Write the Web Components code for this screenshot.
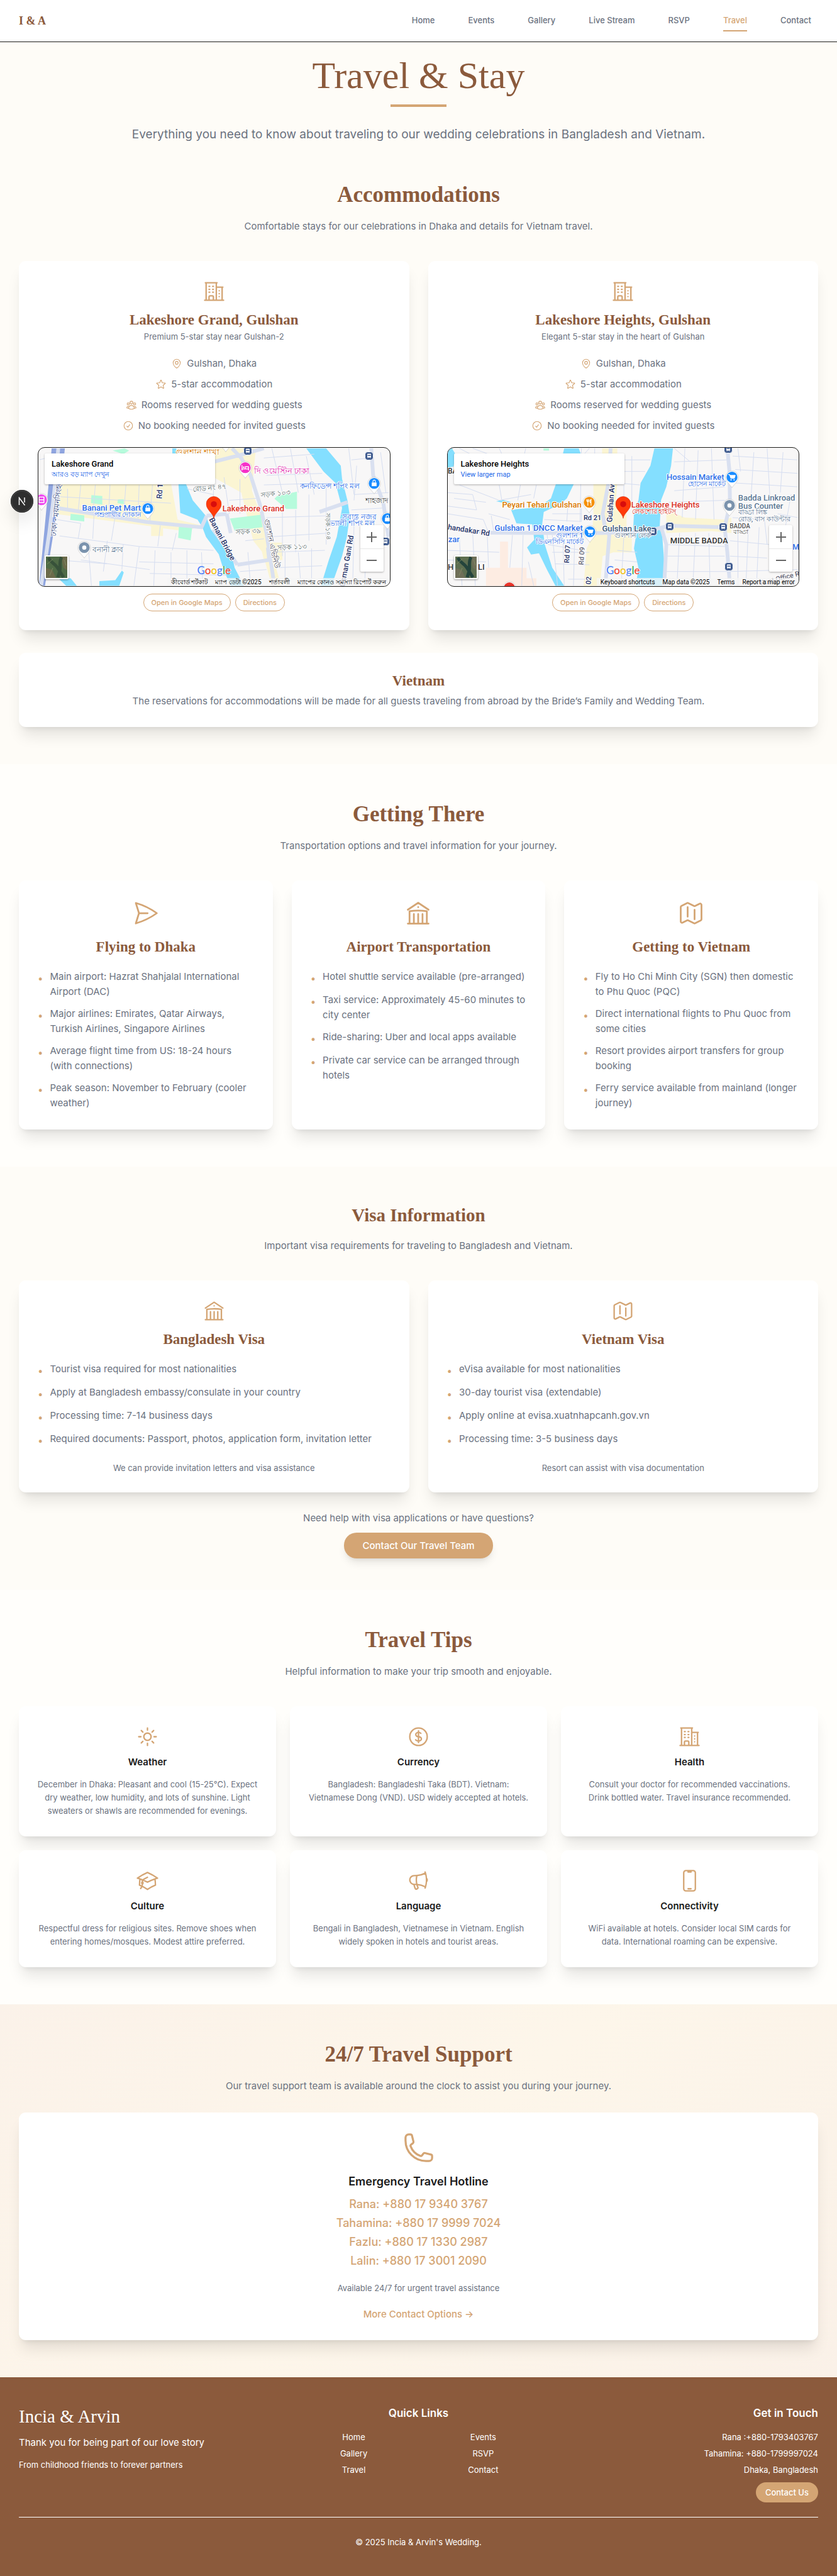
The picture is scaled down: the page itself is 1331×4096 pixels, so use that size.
<!DOCTYPE html>
<html lang="en">
<head>
<meta charset="utf-8">
<meta name="viewport" content="width=device-width, initial-scale=1">
<title>Travel &amp; Stay</title>
<style>
:root{--brown:#8b5a3c;--gold:#d4a574;--gray:#6b7280;--ink:#1a1a1a;--cream:#fefcf7;--ivory:#fffefb;
--serif:"Liberation Serif",serif;--sans:Inter,sans-serif;--gutter:30px}
body{margin:0;background:var(--cream);color:var(--gray);font:400 15px/22px var(--sans)}
</style>
</head>
<body>
<travel-page></travel-page>
<script>
const ICONS={
building:'M2.25 21h19.5m-18-18v18m10.5-18v18m6-13.5V21M6.75 6.75h.75m-.75 3h.75m-.75 3h.75m3-6h.75m-.75 3h.75m-.75 3h.75M6.75 21v-3.375c0-.621.504-1.125 1.125-1.125h2.25c.621 0 1.125.504 1.125 1.125V21M3 3h12m-.75 4.5H21m-3.75 3.75h.008v.008h-.008v-.008Zm0 3h.008v.008h-.008v-.008Zm0 3h.008v.008h-.008v-.008Z',
pin:'M15 10.5a3 3 0 1 1-6 0 3 3 0 0 1 6 0Z M19.5 10.5c0 7.142-7.5 11.25-7.5 11.25S4.5 17.642 4.5 10.5a7.5 7.5 0 1 1 15 0Z',
star:'M11.48 3.499a.562.562 0 0 1 1.04 0l2.125 5.111a.563.563 0 0 0 .475.345l5.518.442c.499.04.701.663.321.988l-4.204 3.602a.563.563 0 0 0-.182.557l1.285 5.385a.562.562 0 0 1-.84.61l-4.725-2.885a.562.562 0 0 0-.586 0L6.982 20.54a.562.562 0 0 1-.84-.61l1.285-5.386a.562.562 0 0 0-.182-.557l-4.204-3.602a.562.562 0 0 1 .321-.988l5.518-.442a.563.563 0 0 0 .475-.345L11.48 3.5Z',
group:'M18 18.72a9.094 9.094 0 0 0 3.741-.479 3 3 0 0 0-4.682-2.72m.94 3.198.001.031c0 .225-.012.447-.037.666A11.944 11.944 0 0 1 12 21c-2.17 0-4.207-.576-5.963-1.584A6.062 6.062 0 0 1 6 18.719m12 0a5.971 5.971 0 0 0-.941-3.197m0 0A5.995 5.995 0 0 0 12 12.75a5.995 5.995 0 0 0-5.058 2.772m0 0a3 3 0 0 0-4.681 2.72 8.986 8.986 0 0 0 3.74.477m.94-3.197a5.971 5.971 0 0 0-.94 3.197M15 6.75a3 3 0 1 1-6 0 3 3 0 0 1 6 0Zm6 3a2.25 2.25 0 1 1-4.5 0 2.25 2.25 0 0 1 4.5 0Zm-13.5 0a2.25 2.25 0 1 1-4.5 0 2.25 2.25 0 0 1 4.5 0Z',
check:'M9 12.75 11.25 15 15 9.75M21 12a9 9 0 1 1-18 0 9 9 0 0 1 18 0Z',
plane:'M6 12 3.269 3.125A59.769 59.769 0 0 1 21.485 12 59.768 59.768 0 0 1 3.27 20.875L5.999 12Zm0 0h7.5',
library:'M12 21v-8.25M15.75 21v-8.25M8.25 21v-8.25M3 9l9-6 9 6m-1.5 12V10.332A48.36 48.36 0 0 0 12 9.75c-2.551 0-5.056.2-7.5.582V21M3 21h18M12 6.75h.008v.008H12V6.75Z',
map:'M9 6.75V15m6-6v8.25m.503 3.498 4.875-2.437c.381-.19.622-.58.622-1.006V4.82c0-.836-.88-1.38-1.628-1.006l-3.869 1.934c-.317.159-.69.159-1.006 0L9.503 3.252a1.125 1.125 0 0 0-1.006 0L3.622 5.689C3.24 5.88 3 6.27 3 6.695V19.18c0 .836.88 1.38 1.628 1.006l3.869-1.934c.317-.159.69-.159 1.006 0l4.994 2.497c.317.158.69.158 1.006 0Z',
sun:'M12 3v2.25m6.364.386-1.591 1.591M21 12h-2.25m-.386 6.364-1.591-1.591M12 18.75V21m-4.773-4.227-1.591 1.591M5.25 12H3m4.227-4.773L5.636 5.636M15.75 12a3.75 3.75 0 1 1-7.5 0 3.75 3.75 0 0 1 7.5 0Z',
dollar:'M12 6v12m-3-2.818.879.659c1.171.879 3.07.879 4.242 0 1.172-.879 1.172-2.303 0-3.182C13.536 12.219 12.768 12 12 12c-.725 0-1.45-.22-2.003-.659-1.106-.879-1.106-2.303 0-3.182s2.9-.879 4.006 0l.415.33M21 12a9 9 0 1 1-18 0 9 9 0 0 1 18 0Z',
cap:'M4.26 10.147a60.438 60.438 0 0 0-.491 6.347A48.62 48.62 0 0 1 12 20.904a48.62 48.62 0 0 1 8.232-4.41 60.46 60.46 0 0 0-.491-6.347m-15.482 0a50.636 50.636 0 0 0-2.658-.813A59.906 59.906 0 0 1 12 3.493a59.903 59.903 0 0 1 10.399 5.84c-.896.248-1.783.52-2.658.814m-15.482 0A50.717 50.717 0 0 1 12 13.489a50.702 50.702 0 0 1 7.74-3.342M6.75 15a.75.75 0 1 0 0-1.5.75.75 0 0 0 0 1.5Zm0 0v-3.675A55.378 55.378 0 0 1 12 8.443m-7.007 11.55A5.981 5.981 0 0 0 6.75 15.75v-1.5',
megaphone:'M10.34 15.84c-.688-.06-1.386-.09-2.09-.09H7.5a4.5 4.5 0 1 1 0-9h.75c.704 0 1.402-.03 2.09-.09m0 9.18c.253.962.584 1.892.985 2.783.247.55.06 1.21-.463 1.511l-.657.38c-.551.318-1.26.117-1.527-.461a20.845 20.845 0 0 1-1.44-4.282m3.102.069a18.03 18.03 0 0 1-.59-4.59c0-1.586.205-3.124.59-4.59m0 9.18a23.848 23.848 0 0 1 8.835 2.535M10.34 6.66a23.847 23.847 0 0 0 8.835-2.535m0 0A23.74 23.74 0 0 0 18.795 3m.38 1.125a23.91 23.91 0 0 1 1.014 5.395m-1.014 8.855c-.118.38-.245.754-.38 1.125m.38-1.125a23.91 23.91 0 0 0 1.014-5.395m0-3.46c.495.413.811 1.035.811 1.73 0 .695-.316 1.317-.811 1.73m0-3.46a24.347 24.347 0 0 1 0 3.46',
mobile:'M10.5 1.5H8.25A2.25 2.25 0 0 0 6 3.75v16.5a2.25 2.25 0 0 0 2.25 2.25h7.5A2.25 2.25 0 0 0 18 20.25V3.75a2.25 2.25 0 0 0-2.25-2.25H13.5m-3 0V3h3V1.5m-3 0h3m-3 18.75h3',
phone:'M2.25 6.75c0 8.284 6.716 15 15 15h2.25a2.25 2.25 0 0 0 2.25-2.25v-1.372c0-.516-.351-.966-.852-1.091l-4.423-1.106c-.44-.11-.902.055-1.173.417l-.97 1.293c-.282.376-.769.542-1.21.38a12.035 12.035 0 0 1-7.143-7.143c-.162-.441.004-.928.38-1.21l1.293-.97c.363-.271.527-.734.417-1.173L6.963 3.102a1.125 1.125 0 0 0-1.091-.852H4.5A2.25 2.25 0 0 0 2.25 4.5v2.25Z'
};
const define=(name,css,render)=>customElements.define(name,class extends HTMLElement{
  connectedCallback(){
    if(this.shadowRoot)return;
    const t=document.createElement('template');
    t.innerHTML=`<style>*{box-sizing:border-box}h1,h2,h3,h4,p,ul{margin:0;padding:0}ul{list-style:none}a{color:inherit;text-decoration:none}${css}</style>${render(this)}`;
    this.attachShadow({mode:'open'}).append(t.content.cloneNode(true));
  }
});

define('ui-icon',':host{display:block;color:var(--gold);width:var(--size,37px);height:var(--size,37px);flex:none}svg{display:block;width:100%;height:100%}',
 e=>`<svg viewBox="0 0 24 24" fill="none" stroke="currentColor" stroke-width="1.5" stroke-linecap="round" stroke-linejoin="round" aria-hidden="true"><path d="${ICONS[e.getAttribute('name')]}"/></svg>`);

define('site-header',`:host{display:block;background:#fff;border-bottom:1px solid #1c1c1a}
 div{display:flex;align-items:center;justify-content:space-between;height:66px;padding:0 var(--gutter)}
 .logo{font:700 18px/26px var(--serif);color:var(--brown)}
 nav{display:flex;gap:31px;font:500 13px/18px var(--sans)}
 nav a{padding:7px 0;margin:0 11px;border-bottom:2px solid transparent}
 nav a[aria-current]{color:var(--gold);border-color:var(--gold)}`,
 ()=>`<div><a class="logo" href="#">I &amp; A</a><nav>${['Home','Events','Gallery','Live Stream','RSVP','Travel','Contact'].map(n=>`<a href="#"${n==='Travel'?' aria-current="page"':''}>${n}</a>`).join('')}</nav></div>`);

define('page-hero',`:host{display:flex;flex-direction:column;align-items:center;text-align:center;padding:23px var(--gutter) 3px}
 h1{font:400 60px/60px var(--serif);color:var(--brown)}
 i{width:89px;height:4px;background:var(--gold);margin:16px 0 31px}
 p{font-size:19px;line-height:26px}`,
 ()=>`<h1>Travel &amp; Stay</h1><i></i><p>Everything you need to know about traveling to our wedding celebrations in Bangladesh and Vietnam.</p>`);

define('page-section',`:host{display:block;padding:59px var(--gutter)}
 :host([tone=ivory]){background:var(--ivory)}
 :host([tone=warm]){background:linear-gradient(135deg,#fbf2e9 0%,#fdf6ea 50%,#faf1e8 100%)}
 header{text-align:center;margin-bottom:44px}
 :host([tone=warm]) header{margin-bottom:31px}
 h2{font:700 35px/37px var(--serif);color:var(--brown);padding-top:2px;margin-bottom:21px}
 :host([small]) h2{font-size:29px;line-height:33px}`,
 e=>`<header><h2>${e.getAttribute('heading')}</h2><p>${e.getAttribute('lead')}</p></header><slot></slot>`);

define('card-grid',`:host{display:grid;grid-template-columns:repeat(var(--cols,2),minmax(0,1fr));gap:var(--gap,30px)}`,()=>'<slot></slot>');

define('ui-card',`:host{display:flex;flex-direction:column;align-items:center;text-align:center;background:#fff;border-radius:11px;padding:30px;
  box-shadow:0 18px 23px -5px rgb(0 0 0/.1),0 7px 9px -6px rgb(0 0 0/.1)}
 h3{font:700 23px/30px var(--serif);color:var(--brown)}
 ui-icon{margin-bottom:12px}
 :host([large]) ui-icon{--size:44px;margin-bottom:17px}
 ::slotted(*){align-self:stretch}`,
 e=>`${e.hasAttribute('icon')?`<ui-icon name="${e.getAttribute('icon')}"></ui-icon>`:''}<h3>${e.getAttribute('heading')}</h3><slot></slot>`);

define('bullet-list',`:host{display:block;text-align:left;line-height:24px;margin-top:20px}
 ul{display:flex;flex-direction:column;gap:11px}
 li{display:flex;gap:11px;min-height:26px}
 b{color:var(--gold);font-weight:400;line-height:22px;margin-top:4px}`,
 e=>`<ul>${e.getAttribute('items').split('|').map(t=>`<li><b>•</b><span>${t}</span></li>`).join('')}</ul>`);

define('tip-card',`:host{display:flex;flex-direction:column;align-items:center;text-align:center;background:#fff;border-radius:11px;padding:30px 27px;
  box-shadow:0 18px 23px -5px rgb(0 0 0/.1),0 7px 9px -6px rgb(0 0 0/.1)}
 h3{font:600 15px/22px var(--sans);color:var(--ink);margin:11px 0 14px}
 p{font-size:13px;line-height:21px}`,
 e=>`<ui-icon name="${e.getAttribute('icon')}"></ui-icon><h3>${e.getAttribute('heading')}</h3><p><slot></slot></p>`);

define('hotel-card',`:host{display:block}
 .sub{font-size:13px;line-height:18px;margin-top:2px}
 ul{display:flex;flex-direction:column;gap:11px;margin:23px 0}
 li{display:flex;justify-content:center;align-items:center;gap:7px}
 ui-icon{--size:18px}
 .links{display:flex;justify-content:center;gap:7px;margin-top:11px}
 .links a{font:500 11px/16px var(--sans);color:var(--gold);border:1px solid var(--gold);border-radius:14px;padding:5px 12px}`,
 e=>`<ui-card icon="building" heading="${e.getAttribute('heading')}"><p class="sub">${e.getAttribute('sub')}</p>
 <ul><li><ui-icon name="pin"></ui-icon>Gulshan, Dhaka</li><li><ui-icon name="star"></ui-icon>5-star accommodation</li><li><ui-icon name="group"></ui-icon>Rooms reserved for wedding guests</li><li><ui-icon name="check"></ui-icon>No booking needed for invited guests</li></ul>
 <city-map place="${e.getAttribute('place')}"></city-map>
 <div class="links"><a href="#">Open in Google Maps</a><a href="#">Directions</a></div></ui-card>`);

/* Map drawings share one 1568-unit wide grid; dx is the map's left edge on it. */
const BLUE='#2f6fe8',NAVY='#1f3166',SLATE='#5b7793',RED='#d93025';
const MAPS={
grand:{title:'Lakeshore Grand',more:'আরও বড় ম্যাপ দেখুন',dx:140,
 legal:['কীবোর্ড শর্টকাট','ম্যাপ ডেটা ©2025','শর্তাবলী','ম্যাপের কোনও সমস্যা রিপোর্ট করুন'],
 land:[['#fbf5d3','M205 240H640L665 430 760 462 690 490 610 475V515H565V465L200 400ZM800 60H960L945 280 985 430 1055 774H1020L985 600 950 540 905 290 800 210ZM975 550H1060V640H990Z'],
 ['#b6fbdc','M340 303 381 308V352L338 345ZM262 400 313 408V440L260 432ZM670 465 720 470 714 538 667 525ZM862 425 978 405 985 470 880 488ZM1040 308 1115 285V375H1075L1030 322ZM420 72 465 60 482 72 460 90ZM440 325H462V350L438 345Z'],
 ['#84dfff','M645 60H660V90H645ZM668 240H695L722 330 772 412 790 480 832 560 868 605 880 680 915 774H865L838 690 820 610 772 520 758 470 740 430 675 395ZM1150 60H1225L1280 150 1285 220 1305 330 1314 410 1303 520 1285 620 1245 774H1205L1235 640 1265 520 1285 370 1260 240 1215 180ZM215 735H262L285 774H245ZM370 750 430 745 455 695 462 705 445 774H370Z'],
 ['#8fa5e0','M190 60H240Q222 300 165 774H142Q170 400 190 60Z']],
 wide:'M215 60Q195 420 150 774M210 370 545 442 755 470 775 410M800 130 900 95 990 60M870 60 905 110 940 200 975 350 1000 500 1030 774M1395 60 1402 200 1440 340 1460 520M890 665 1010 640 1005 575M775 410 850 400M800 480 890 665M1200 390 1305 340M850 400 865 500',
 thin:'M142 120 200 100M250 270V380M300 250 290 390M355 250 345 400M410 250 405 410M470 250 460 430M520 250 515 435M570 250 560 445M205 310 640 345M210 430 300 450 290 530M220 515 520 570 800 590M300 640 560 690M330 600 340 774M400 540 385 700M460 560 455 690M520 570 500 774M580 590 575 774M640 600 640 774M700 590 700 774M755 600 760 774M210 640 400 660M520 650 800 660M560 710 850 720M600 460 590 570M660 500 645 590M430 410 415 540M350 400 345 530M800 240 800 330M840 210 860 400M900 220 900 400M700 270 800 300M860 330 960 320M990 110 1180 90M1020 60 1060 290M1090 60 1120 290M1150 100 1180 300M1000 200 1210 190M990 250 1240 240M1060 320 1060 620M1110 380 1110 600M1160 300 1160 540M1225 260 1225 560M1000 420 1240 410M1010 520 1240 500M1010 600 1220 590M1040 680 1210 670M1070 600 1070 774M1120 600 1130 774M1170 580 1170 774M1320 120 1390 110M1310 60 1330 300 1461 290M1340 150 1330 330M1430 80 1450 290M1320 380 1440 370M1330 450 1325 774M1380 420 1370 774M900 700 1000 690M920 540 990 530M930 600 940 774',
 pins:[[312,590,'#7b93ad','•'],[553,386,'#1a8cff','▮'],[921,175,'#f531c8','▬'],[1407,256,'#1a8cff','▮'],[847,36,'#f58f00',''],[152,341,'#f04cf0','▪'],[1456,439,'#1a8cff','▮']],
 buses:[[929,72],[1388,98],[1448,543]],
 labels:[['Banani Pet Mart',305,368,13,BLUE],['পশুপাখীর দোকান',350,405,11,BLUE],['বনানী ক্লাব',343,588,12,SLATE],['গুলশান শাখা',656,76,13,'#d97a00'],['দি ওয়েস্টিন ঢাকা',953,175,13,'#e31fb0'],['কনফিডেন্স শপিং মল',1127,256,12,BLUE],['শাহজাদ',1373,333,12,'#444'],['সবাস্ত নজর',1286,418,12,BLUE],['ভ্যালী শপিং মল',1238,448,12,BLUE],['রোড নং ৪৭',724,265,11,'#566',-5],['সড়ক ১০৩',980,296,11,'#566',-5],['সড়ক ৩৯',884,492,11,'#566',-4],['সড়ক ১১৩',1040,573,11,'#566',-3],['Lakeshore Grand',834,371,13,RED],['Rd 1',568,284,12,NAVY,-86],['Banani Bridge',744,530,12,NAVY,62],['Osman Gani Rd',1204,646,12,NAVY,-80],['ঢাকা - ময়মনসিংহ',112,385,12,'#33467f',-84],['গুলশান এভিনিউ',925,555,12,'#556',78],['সড়ক ১০৪',1180,466,10,'#566',88]],
 sat:['#4f6b46','#38523a','#6b6a4a']},
heights:{title:'Lakeshore Heights',more:'View larger map',dx:106,
 legal:['Keyboard shortcuts','Map data ©2025','Terms','Report a map error'],
 land:[['#fbf5d3','M655 240H745L740 330 780 350V470L745 560 730 600 690 620 680 774H618L630 580 650 520 655 400ZM688 60H745V90H688ZM930 380 1000 420 1150 430 1175 420V500L1100 490 930 500ZM720 500H800V600H720Z'],
 ['#fdece2','M303 545H333V680H403V735H440V774H250V680H303Z'],
 ['#b6fbdc','M467 60H488V72H467Z'],
 ['#84dfff','M106 60H122L135 90 128 155 106 160ZM545 60H600L608 90H540ZM515 240H583L555 320 530 350 468 390 462 455 472 560 500 680 545 774H512L480 690 450 605 420 612 405 575 432 535 425 455 365 450 345 380 375 375 420 370 455 360 495 320ZM885 60H955L948 150 930 260 910 330 905 470 915 520 922 650 915 774H815L825 680 808 580 815 520 805 480 808 400 825 330 833 240 870 150ZM288 335 315 328 345 340 320 345Z']],
 wide:'M106 470 260 498 450 500 690 500 860 490 940 462 1145 470M720 60 712 240 690 400 700 480 715 510 700 774M1160 60 1168 180 1170 350 1150 470 1160 600 1170 774M912 480 915 490 930 560 922 774',
 thin:'M106 290 200 300 215 380 106 360M150 250 300 330 420 300M300 250 310 330M380 250 370 330M440 250 430 320M130 320 250 340M150 530 160 774M200 500 210 774M106 590 300 600M255 510 260 680M350 510 340 680M390 510 385 774M106 640 250 650M410 650 430 774M260 498 240 430 106 400M470 430 610 440M610 60 605 440M260 400 340 430M270 410 280 500M480 500 485 560 610 590M500 510 520 774M540 500 545 774M585 510 580 774M500 600 640 600M510 660 640 665M560 740 640 740M610 340V440M560 330 555 440M500 400 610 400M770 250V340M800 100V350M745 120 870 120M770 180 850 180M745 240 830 250M745 590 820 600M735 640 820 650M730 690 820 690M770 510 760 774M660 60V90M640 60 620 90M960 130 1160 120M950 200 1160 210M960 280 1150 260M940 340 1150 330M1000 60 990 420M1050 70 1040 430M1100 60 1110 430M960 60 1020 130M1180 100 1427 120M1200 60 1210 180M1260 80 1250 300M1310 60 1320 300M1370 80 1360 290M1190 170 1427 190M1190 240 1427 260M1180 420 1300 430 1310 560M1240 450 1230 774M1280 470 1270 774M930 560 1150 570M930 620 1150 620M930 700 1160 700M980 500 970 774M1040 500 1030 774M1090 500 1095 774M1170 540 1320 560M1170 620 1310 630M1170 700 1427 690M1200 500V774M1350 400 1427 420M1400 300 1380 460M150 60 220 110M300 60 310 90M400 60 395 90M200 60 260 90',
 pins:[[640,353,'#f58f00','Ψ'],[642,507,'#1a8cff','▾'],[1178,225,'#1a8cff','▾'],[1170,371,'#7b93ad','•'],[339,800,'#e8352b','']],
 buses:[[1164,62],[944,467],[1146,469],[1168,674],[881,491]],
 labels:[['Peyari Tehari Gulshan',312,352,13,'#d97a00'],['Rd 21',619,420,11,NAVY],['Gulshan 1 DNCC Market',284,472,13,BLUE],['গুলশান 1',514,511,11,BLUE],['ডিএনসিসি মার্কেট',440,543,11,BLUE],['Gulshan Lake',689,475,13,'#3c5a78'],['গুলশান লেক',735,510,11,SLATE],['Hossain Market',932,206,13,BLUE],['হোসেন মার্কেট',1012,243,11,BLUE],['Lakeshore Heights',799,352,13,RED],['লেকশোর হাইটস্',801,388,11,RED],['Badda Linkroad',1202,316,13,SLATE],['Bus Counter',1202,358,13,SLATE],['বাড্ডা লিঙ্ক',1202,392,11,SLATE],['রোড, বাস কাউন্টার',1202,425,11,SLATE],['BADDA',1170,464,10,'#555'],['বাড্ডা',1184,495,10,'#555'],['MIDDLE BADDA',946,538,13,'#333'],['Gulshan Av',650,345,12,NAVY,-86],['Rd 07',524,610,11,NAVY,-86],['Rd 09',578,618,11,'#667',-86],['02',624,745,11,NAVY,-86],['handakar Rd',108,486,12,NAVY,9],['zar',109,532,13,BLUE],['BA',107,178,12,'#333'],['H',107,676,13,'#333'],['LI',221,676,13,'#333'],['Mi',1407,574,12,BLUE],['Post Office Rd',1282,735,11,'#667',-14]],
 sat:['#5d6e50','#24443c','#6f6f58']}
};
define('city-map',`:host{display:block}
 .map{position:relative;height:222px;border:1px solid #1c1c1a;border-radius:11px;overflow:hidden;background:#f8f7f7;font-family:Roboto,sans-serif;text-align:left}
 .map>*{position:absolute}
 .art{inset:0;width:100%;height:100%}
 .label{white-space:nowrap;line-height:1;font-weight:500;text-shadow:1px 0 #fff,-1px 0 #fff,0 1px #fff,0 -1px #fff,1px 1px #fff,-1px -1px #fff}
 .poi,.bus,.main{transform:translate(-50%,-50%)}
 .poi{width:23px;height:31px}.bus{width:14px;height:14px}.main{width:25px;height:36px}
 .info{left:10px;top:9px;width:271px;height:49px;background:#fff;border-radius:2px;box-shadow:0 1px 3px rgb(0 0 0/.3);padding:10px 11px;display:flex;flex-direction:column;align-items:flex-start;gap:3px}
 .info strong{font:500 13px/14px Roboto,sans-serif;color:#000}
 .info a{font:400 11px/14px Roboto,sans-serif;color:#1a66e8}
 .sat{left:10px;bottom:11px;width:38px;height:38px;padding:0;border:2px solid #fff;border-radius:2px;box-shadow:0 1px 3px rgb(0 0 0/.4)}
 .sat svg{display:block}
 .zoom{right:10px;bottom:23px;width:37px;display:flex;flex-direction:column;background:#fff;border-radius:2px;box-shadow:0 1px 3px rgb(0 0 0/.3)}
 .zoom button{height:37px;border:0;background:none;padding:0;display:grid;place-items:center}
 .zoom button+button{border-top:1px solid #e6e6e6}
 .logo{left:50%;bottom:17px;transform:translateX(-50%);font:500 17px/17px Lato,sans-serif;text-shadow:1px 0 #fff,-1px 0 #fff}
 .legal{right:0;bottom:0;height:13px;display:flex;gap:12px;padding:0 6px;background:rgb(245 245 245/.75);font:400 10px/13px Roboto,sans-serif;color:#000;white-space:nowrap}`,
 e=>{const m=MAPS[e.getAttribute('place')],X=x=>((x-m.dx)/13.24).toFixed(2)+'%',Y=y=>((y-57)/7.19).toFixed(2)+'%',at=(x,y)=>`left:${X(x)};top:${Y(y)}`;
 return `<div class="map"><svg class="art" viewBox="${m.dx} 57 1324 719" preserveAspectRatio="none" aria-hidden="true">
 ${m.land.map(([c,d])=>`<path fill="${c}" d="${d}"/>`).join('')}
 <path d="${m.thin}" fill="none" stroke="#d5ddf0" stroke-width="1" vector-effect="non-scaling-stroke"/>
 <path d="${m.wide}" fill="none" stroke="#d9e0f0" stroke-width="6" stroke-linejoin="round" vector-effect="non-scaling-stroke"/></svg>
 ${m.buses.map(([x,y])=>`<svg class="bus" style="${at(x,y)}" viewBox="0 0 14 14"><rect x=".5" y=".5" width="13" height="13" rx="4" fill="#3f5b8f" stroke="#fff"/><rect x="4" y="3.500" width="6" height="6" rx="1" fill="#fff"/><path d="M4.500 5.500h5v1.500h-5z" fill="#3f5b8f"/><path d="M5 10.500v-1m4 1v-1" stroke="#fff"/></svg>`).join('')}
 ${m.labels.map(([t,x,y,s,c,r])=>`<span class="label" style="${at(x,y)};font-size:${s}px;color:${c};transform:translateY(-50%)${r?` rotate(${r}deg)`:''}">${t}</span>`).join('')}
 ${m.pins.map(([x,y,c,g])=>`<svg class="poi" style="${at(x,y)}" viewBox="0 0 24 32"><path d="M12 29C9 24 1.500 19 1.500 11.500a10.500 10.500 0 0 1 21 0C22.500 19 15 24 12 29Z" fill="#fff" stroke="#bbb" stroke-width=".6"/><circle cx="12" cy="11.500" r="9" fill="${c}"/>${({'•':'<circle cx="12" cy="11.500" r="3.500" fill="#fff"/>','▮':'<path d="M8 10h8v6H8z" fill="#fff"/><path d="M10 10V8a2 2 0 0 1 4 0v2" fill="none" stroke="#fff" stroke-width="1.200"/>','▬':'<path d="M6.500 7v9m0-2.500h11V16m0-2.500V10H12v3.500" fill="none" stroke="#fff" stroke-width="1.400"/><circle cx="9.200" cy="10.700" r="1.300" fill="#fff"/>','▪':'<path d="M8 7h8v9H8zM8 11.500h8" fill="none" stroke="#fff" stroke-width="1.500"/>','Ψ':'<path d="M8 6.500v3a2 2 0 0 0 3.500 0v-3M9.700 6.500V17M15 17V6.500c-1.500 1-2 3-1.500 5.500H15" fill="none" stroke="#fff" stroke-width="1.300"/>','▾':'<path d="M6 7h2l2 6.500h6l1.500-5H8.500z" fill="#fff" stroke="#fff"/><circle cx="10.500" cy="16" r="1.100" fill="#fff"/><circle cx="15.500" cy="16" r="1.100" fill="#fff"/>'})[g]||''}</svg>`).join('')}
 <svg class="main" style="left:50%;top:43%" viewBox="0 0 26 37"><path d="M13 36.500C12 28 .5 22 .5 12.800a12.500 12.500 0 0 1 25 0C25.500 22 14 28 13 36.500Z" fill="#ff3b0a" stroke="#d22b12" stroke-width=".6"/><circle cx="13" cy="13" r="5" fill="#d80d0d"/></svg>
 <div class="logo" aria-label="Google"><span style="color:#4d80f5">G</span><span style="color:#f04530">o</span><span style="color:#eebf14">o</span><span style="color:#4d80f5">g</span><span style="color:#34a853">l</span><span style="color:#f04530">e</span></div>
 <div class="info"><strong>${m.title}</strong><a href="#">${m.more}</a></div>
 <button class="sat" aria-label="Satellite view"><svg width="34" height="34" viewBox="0 0 34 34"><path fill="${m.sat[0]}" d="M0 0h34v34H0z"/><path fill="${m.sat[2]}" d="M0 18l10 3 6 13H0zM24 0h10v22l-6-4z"/><path d="M4 2c4 8 10 9 14 15s6 10 10 16M25 1c-5 8-1 14-3 22l-3 10" fill="none" stroke="${m.sat[1]}" stroke-width="5"/><path d="M2 12l9-8M6 30l5-12M29 5l3 9" stroke="#849066" stroke-width=".8"/></svg></button>
 <div class="zoom"><button aria-label="Zoom in"><svg width="16" height="16" viewBox="0 0 16 16"><path d="M8 0v16M0 8h16" stroke="#666" stroke-width="2"/></svg></button><button aria-label="Zoom out"><svg width="16" height="16" viewBox="0 0 16 16"><path d="M0 8h16" stroke="#666" stroke-width="2"/></svg></button></div>
 <div class="legal">${m.legal.map(t=>`<span>${t}</span>`).join('')}</div></div>`});

define('hotline-card',`:host{display:flex;flex-direction:column;align-items:center;text-align:center;background:#fff;border-radius:11px;padding:30px;
  box-shadow:0 18px 23px -5px rgb(0 0 0/.1),0 7px 9px -6px rgb(0 0 0/.1)}
 ui-icon{--size:52px}
 h3{font:600 18px/26px var(--sans);color:var(--ink);margin:15px 0 8px}
 li{font:500 18px/30px var(--sans);color:var(--gold)}
 p{font-size:13px;line-height:18px;margin:19px 0 22px}
 .more{font-weight:500;color:var(--gold)}`,
 ()=>`<ui-icon name="phone"></ui-icon><h3>Emergency Travel Hotline</h3><ul><li><a href="#">Rana: +880 17 9340 3767</a></li><li><a href="#">Tahamina: +880 17 9999 7024</a></li><li><a href="#">Fazlu: +880 17 1330 2987</a></li><li><a href="#">Lalin: +880 17 3001 2090</a></li></ul><p>Available 24/7 for urgent travel assistance</p><a class="more" href="#">More Contact Options →</a>`);

define('site-footer',`:host{display:block;background:var(--brown);color:#fff;padding:44px var(--gutter) 45px;font-size:13px;line-height:18px}
 .cols{display:grid;grid-template-columns:repeat(3,minmax(0,1fr));gap:30px}
 h3{font:400 29px/33px var(--serif);padding-top:2px;margin-bottom:14px}
 .thanks{font-size:15px;line-height:22px;margin-bottom:15px}
 h4{font:600 17px/26px var(--sans);margin-bottom:16px}
 .mid{text-align:center}.end{text-align:right}
 .links{display:grid;grid-template-columns:1fr 1fr;gap:8px}
 .end div{display:flex;flex-direction:column;gap:8px;margin-bottom:18px}
 .btn{background:var(--gold);border-radius:16px;padding:8px 15px;font-weight:500}
 .copy{border-top:1px solid #fff;margin-top:30px;padding-top:30px;text-align:center}`,
 ()=>`<div class="cols"><div><h3>Incia &amp; Arvin</h3><p class="thanks">Thank you for being part of our love story</p><p>From childhood friends to forever partners</p></div>
 <div class="mid"><h4>Quick Links</h4><nav class="links">${['Home','Events','Gallery','RSVP','Travel','Contact'].map(n=>`<a href="#">${n}</a>`).join('')}</nav></div>
 <div class="end"><h4>Get in Touch</h4><div><p>Rana :+880-1793403767</p><p>Tahamina: +880-1799997024</p><p>Dhaka, Bangladesh</p></div><a class="btn" href="#">Contact Us</a></div></div>
 <p class="copy">© 2025 Incia &amp; Arvin's Wedding.</p>`);

define('dev-badge',`:host{position:absolute;left:17px;top:779px;width:36px;height:36px}
 button{width:36px;height:36px;padding:0;border:2px solid #4a4a4a;outline:1px solid #222;outline-offset:-1px;border-radius:50%;background:#2f2f2f;box-shadow:0 14px 28px rgb(0 0 0/.1);display:grid;place-items:center}`,
 ()=>`<button aria-label="Open developer tools"><svg width="14" height="14" viewBox="0 0 14 14" fill="none" stroke="#fff" stroke-width="1.500"><path d="M2.500 13V1.500L11.500 13.500"/><path d="M11 1v8"/></svg></button>`);

define('travel-page',`:host{display:block;position:relative}
 .vietnam{margin-top:36px}.vietnam p{margin-top:6px}
 .note{font-size:13px;line-height:18px;margin-top:23px}
 .help{text-align:center;margin-top:30px}.help p{margin-bottom:22px}
 .btn{background:var(--gold);color:#fff;font-weight:500;border-radius:20px;padding:11px 29px;box-shadow:0 9px 14px -3px rgb(0 0 0/.1),0 4px 6px -4px rgb(0 0 0/.1)}
 .three{--cols:3}.tips{--cols:3;--gap:22px}`,
 ()=>`<site-header></site-header><main><page-hero></page-hero>
 <page-section heading="Accommodations" lead="Comfortable stays for our celebrations in Dhaka and details for Vietnam travel.">
  <card-grid><hotel-card place="grand" heading="Lakeshore Grand, Gulshan" sub="Premium 5-star stay near Gulshan-2"></hotel-card>
  <hotel-card place="heights" heading="Lakeshore Heights, Gulshan" sub="Elegant 5-star stay in the heart of Gulshan"></hotel-card></card-grid>
  <ui-card class="vietnam" heading="Vietnam"><p>The reservations for accommodations will be made for all guests traveling from abroad by the Bride’s Family and Wedding Team.</p></ui-card>
 </page-section>
 <page-section tone="ivory" heading="Getting There" lead="Transportation options and travel information for your journey.">
  <card-grid class="three">
  <ui-card large icon="plane" heading="Flying to Dhaka"><bullet-list items="Main airport: Hazrat Shahjalal International Airport (DAC)|Major airlines: Emirates, Qatar Airways, Turkish Airlines, Singapore Airlines|Average flight time from US: 18-24 hours (with connections)|Peak season: November to February (cooler weather)"></bullet-list></ui-card>
  <ui-card large icon="library" heading="Airport Transportation"><bullet-list items="Hotel shuttle service available (pre-arranged)|Taxi service: Approximately 45-60 minutes to city center|Ride-sharing: Uber and local apps available|Private car service can be arranged through hotels"></bullet-list></ui-card>
  <ui-card large icon="map" heading="Getting to Vietnam"><bullet-list items="Fly to Ho Chi Minh City (SGN) then domestic to Phu Quoc (PQC)|Direct international flights to Phu Quoc from some cities|Resort provides airport transfers for group booking|Ferry service available from mainland (longer journey)"></bullet-list></ui-card>
  </card-grid>
 </page-section>
 <page-section small heading="Visa Information" lead="Important visa requirements for traveling to Bangladesh and Vietnam.">
  <card-grid>
  <ui-card icon="library" heading="Bangladesh Visa"><bullet-list items="Tourist visa required for most nationalities|Apply at Bangladesh embassy/consulate in your country|Processing time: 7-14 business days|Required documents: Passport, photos, application form, invitation letter"></bullet-list><p class="note">We can provide invitation letters and visa assistance</p></ui-card>
  <ui-card icon="map" heading="Vietnam Visa"><bullet-list items="eVisa available for most nationalities|30-day tourist visa (extendable)|Apply online at evisa.xuatnhapcanh.gov.vn|Processing time: 3-5 business days"></bullet-list><p class="note">Resort can assist with visa documentation</p></ui-card>
  </card-grid>
  <div class="help"><p>Need help with visa applications or have questions?</p><a class="btn" href="#">Contact Our Travel Team</a></div>
 </page-section>
 <page-section tone="ivory" heading="Travel Tips" lead="Helpful information to make your trip smooth and enjoyable.">
  <card-grid class="tips">
  <tip-card icon="sun" heading="Weather">December in Dhaka: Pleasant and cool (15-25°C). Expect dry weather, low humidity, and lots of sunshine. Light sweaters or shawls are recommended for evenings.</tip-card>
  <tip-card icon="dollar" heading="Currency">Bangladesh: Bangladeshi Taka (BDT). Vietnam: Vietnamese Dong (VND). USD widely accepted at hotels.</tip-card>
  <tip-card icon="building" heading="Health">Consult your doctor for recommended vaccinations. Drink&nbsp;bottled water. Travel insurance recommended.</tip-card>
  <tip-card icon="cap" heading="Culture">Respectful dress for religious sites. Remove shoes when entering homes/mosques. Modest attire preferred.</tip-card>
  <tip-card icon="megaphone" heading="Language">Bengali in Bangladesh, Vietnamese in Vietnam. English widely spoken in hotels and tourist areas.</tip-card>
  <tip-card icon="mobile" heading="Connectivity">WiFi available at hotels. Consider local SIM cards for data.&nbsp;International roaming can be expensive.</tip-card>
  </card-grid>
 </page-section>
 <page-section tone="warm" heading="24/7 Travel Support" lead="Our travel support team is available around the clock to assist you during your journey."><hotline-card></hotline-card></page-section>
 </main><site-footer></site-footer><dev-badge></dev-badge>`);
</script>
</body>
</html>
